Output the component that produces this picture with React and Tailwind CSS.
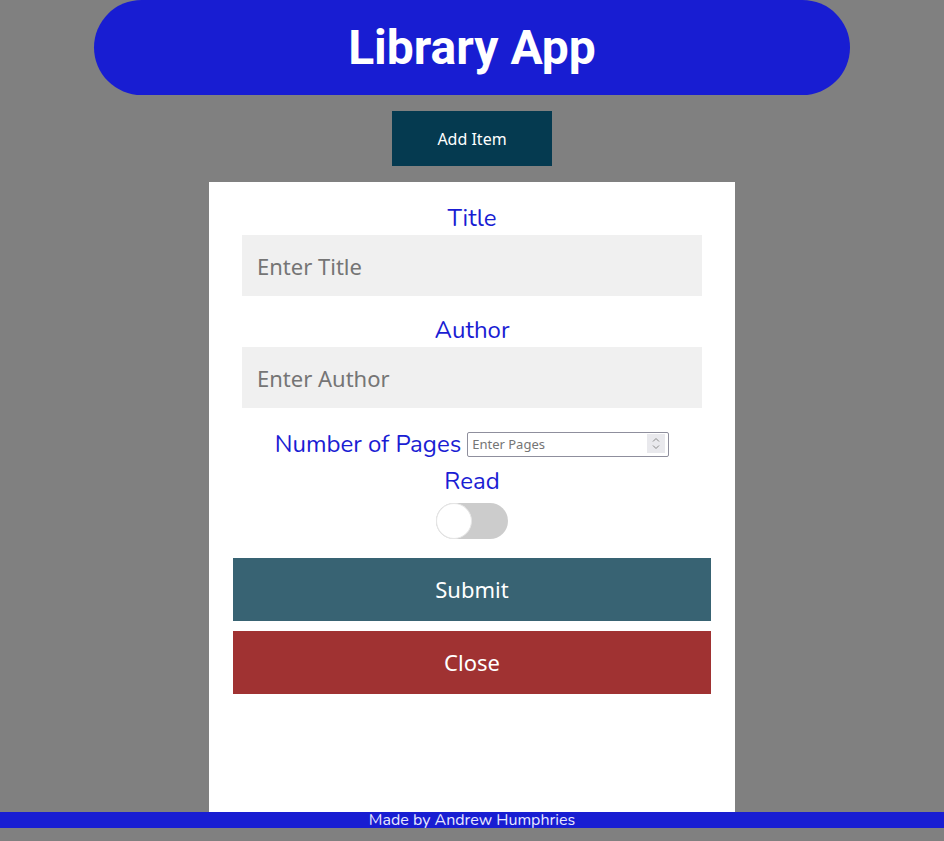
import { useState } from 'react';

const labelCls = "text-[24px] leading-[26px] text-[#1a1dd3] font-['Nunito','Lato',sans-serif]";
const inputCls =
  "h-[61px] w-[460px] bg-[#f0f0f0] px-[15px] text-[22px] text-[#333] placeholder:text-[#757575] font-['Noto_Sans',sans-serif] outline-none";

function Header() {
  return (
    <header className="mx-auto flex h-[95px] w-[756px] items-center justify-center rounded-full bg-[#181dd2]">
      <h1 className="font-['Roboto',sans-serif] text-[48px] font-bold leading-none text-white">Library App</h1>
    </header>
  );
}

function Toggle({ on, setOn }) {
  return (
    <button
      type="button"
      onClick={() => setOn(!on)}
      className={`relative block h-[36px] w-[72px] rounded-full ${on ? 'bg-[#386373]' : 'bg-[#cccccc]'}`}
    >
      <span
        className={`absolute top-0 h-[36px] w-[36px] rounded-full border border-[#e6e6e6] bg-white ${on ? 'left-[36px]' : 'left-0'}`}
      />
    </button>
  );
}

function PagesInput() {
  return (
    <div className="relative h-[25px] w-[202px]">
      <input
        type="number"
        placeholder="Enter Pages"
        className="h-[25px] w-[202px] rounded-[2px] border border-[#8f8f9d] bg-white pl-[4px] pr-[24px] font-['Noto_Sans',sans-serif] text-[13px] text-[#333] [appearance:textfield] placeholder:text-[#757575] [&::-webkit-inner-spin-button]:appearance-none"
      />
      <span className="pointer-events-none absolute right-[4px] top-[3px] flex h-[19px] w-[18px] items-center justify-center bg-[#e9e9ed]">
        <svg width="8" height="15" viewBox="0 0 8 15" fill="none" stroke="#8a8a8a" strokeWidth="1">
          <path d="M1 5.5 L4 2.5 L7 5.5" />
          <path d="M1 9.5 L4 12.5 L7 9.5" />
        </svg>
      </span>
    </div>
  );
}

function ItemForm() {
  const [read, setRead] = useState(false);
  return (
    <form className="mx-auto flex h-[630px] w-[526px] flex-col items-center bg-white pt-[23px]">
      <label className={labelCls}>Title</label>
      <input className={`${inputCls} mt-[4px]`} placeholder="Enter Title" />
      <label className={`${labelCls} mt-[21px]`}>Author</label>
      <input className={`${inputCls} mt-[4px]`} placeholder="Enter Author" />
      <div className="mt-[23px] flex h-[25px] items-center gap-[6px]">
        <label className={labelCls}>Number of Pages</label>
        <PagesInput />
      </div>
      <label className={`${labelCls} mt-[12px]`}>Read</label>
      <div className="mt-[9px] flex">
        <Toggle on={read} setOn={setRead} />
      </div>
      <button
        type="button"
        className="mt-[19px] h-[63px] w-[478px] bg-[#386373] font-['Noto_Sans',sans-serif] text-[22px] text-white"
      >
        Submit
      </button>
      <button
        type="button"
        className="mt-[10px] h-[63px] w-[478px] bg-[#a03232] font-['Noto_Sans',sans-serif] text-[22px] text-white"
      >
        Close
      </button>
    </form>
  );
}

export default function App() {
  return (
    <div className="min-h-[841px] bg-[#808080]">
      <Header />
      <div className="mt-[16px] flex justify-center">
        <button
          type="button"
          className="h-[55px] w-[160px] bg-[#053a50] font-['Noto_Sans',sans-serif] text-[16px] text-white"
        >
          Add Item
        </button>
      </div>
      <div className="mt-[16px]">
        <ItemForm />
      </div>
      <footer className="flex h-[16px] items-center justify-center bg-[#181dd2] font-['Nunito','Lato',sans-serif] text-[16px] leading-none text-[#e8e8ff]">
        Made by Andrew Humphries
      </footer>
    </div>
  );
}
